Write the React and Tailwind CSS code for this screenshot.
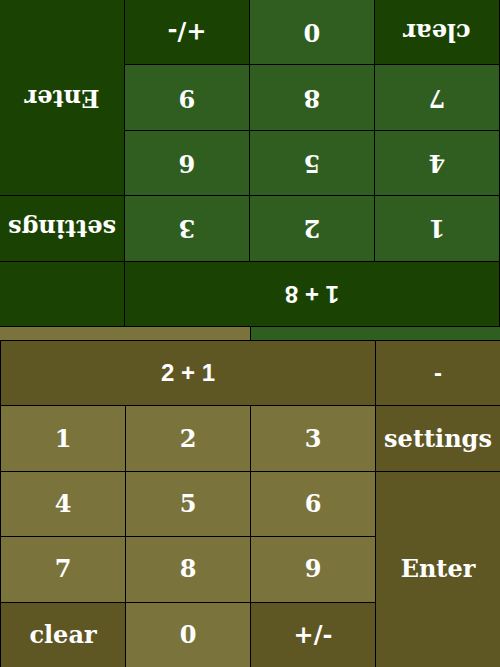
import clsx from 'clsx';

// two-player calculator: each side gets its own keypad, the far one is flipped
const GREEN = { dark: 'bg-[#1a4303]', light: 'bg-[#2f5e20]' };
const OLIVE = { dark: 'bg-[#5f5723]', light: 'bg-[#7a743c]' };

const KEY_FONT = 'font-["DejaVu_Serif",serif] font-bold text-[24px]';
const DISPLAY_FONT = 'font-["Liberation_Sans",Arial,sans-serif] font-bold text-[24px]';

function Key({ label, tone, className }) {
  return (
    <div
      className={clsx(
        'flex items-center justify-center text-white select-none',
        KEY_FONT,
        tone,
        className,
      )}
    >
      {label}
    </div>
  );
}

function Pad({ theme, display, op, flipped }) {
  return (
    <div
      className={clsx(
        'h-[327px] w-full border-t border-l border-black bg-black grid grid-cols-4 grid-rows-5 gap-px',
        flipped && 'rotate-180',
      )}
    >
      {/* expression readout + pending operator */}
      <div
        className={clsx(
          'col-span-3 flex items-center justify-center text-white',
          DISPLAY_FONT,
          theme.dark,
        )}
      >
        {display}
      </div>
      <div className={clsx('flex items-center justify-center text-white', DISPLAY_FONT, theme.dark)}>
        {op}
      </div>

      <Key label="1" tone={theme.light} />
      <Key label="2" tone={theme.light} />
      <Key label="3" tone={theme.light} />
      <Key label="settings" tone={theme.dark} />

      <Key label="4" tone={theme.light} />
      <Key label="5" tone={theme.light} />
      <Key label="6" tone={theme.light} />
      <Key label="Enter" tone={theme.dark} className="row-span-3" />

      <Key label="7" tone={theme.light} />
      <Key label="8" tone={theme.light} />
      <Key label="9" tone={theme.light} />

      <Key label="clear" tone={theme.dark} />
      <Key label="0" tone={theme.light} />
      <Key label="+/-" tone={theme.dark} />
    </div>
  );
}

export default function App() {
  const share = 50; // olive player's share of the tug bar

  return (
    <div className="w-[500px] h-[667px] flex flex-col bg-black overflow-hidden">
      <Pad theme={GREEN} display="1 + 8" op="" flipped />

      <div className="h-[13px] flex gap-px bg-black">
        <div className={clsx('h-full', OLIVE.light)} style={{ width: `${share}%` }} />
        <div className={clsx('h-full flex-1', GREEN.light)} />
      </div>

      <Pad theme={OLIVE} display="2 + 1" op="-" />
    </div>
  );
}
